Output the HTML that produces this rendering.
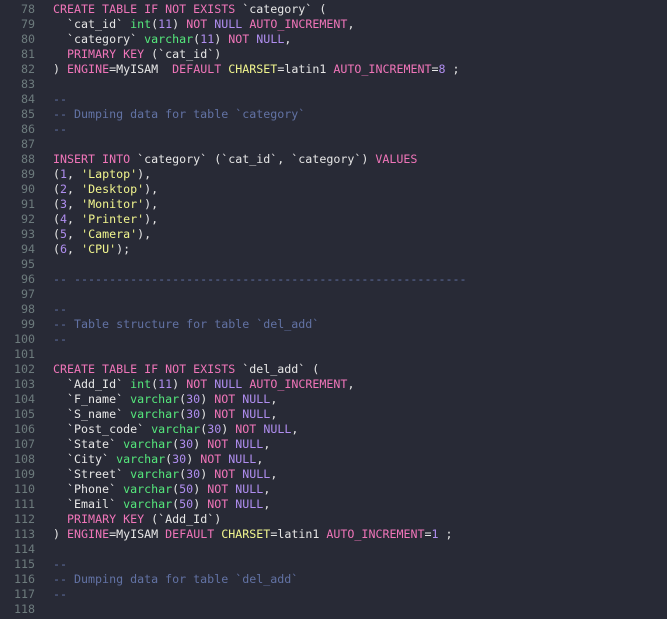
<!DOCTYPE html>
<html><head><style>
html,body{margin:0;padding:0;background:#282a36;width:667px;height:619px;overflow:hidden}
pre{margin:0;padding-top:2px;font-family:"DejaVu Sans Mono","Liberation Mono",monospace;font-size:11.65px;line-height:15px;color:#e6e6e6}
.n{display:inline-block;width:35px;text-align:right;color:#6d7b7d;margin-right:18px}
.k{color:#f075b9}.p{color:#b08ef0}.g{color:#55e87c}.y{color:#f1f58e}.c{color:#6272a4}
</style></head><body><pre>
<span class="n">78</span><span class="k">CREATE TABLE IF NOT EXISTS</span> `category` (
<span class="n">79</span>  `cat_id` <span class="g">int</span>(<span class="p">11</span>) <span class="k">NOT</span> <span class="p">NULL</span> <span class="k">AUTO_INCREMENT</span>,
<span class="n">80</span>  `category` <span class="g">varchar</span>(<span class="p">11</span>) <span class="k">NOT</span> <span class="p">NULL</span>,
<span class="n">81</span>  <span class="k">PRIMARY KEY</span> (`cat_id`)
<span class="n">82</span>) <span class="k">ENGINE</span>=MyISAM  <span class="k">DEFAULT</span> <span class="y">CHARSET</span>=latin1 <span class="k">AUTO_INCREMENT</span>=<span class="p">8</span> ;
<span class="n">83</span>
<span class="n">84</span><span class="c">--</span>
<span class="n">85</span><span class="c">-- Dumping data for table `category`</span>
<span class="n">86</span><span class="c">--</span>
<span class="n">87</span>
<span class="n">88</span><span class="k">INSERT INTO</span> `category` (`cat_id`, `category`) <span class="k">VALUES</span>
<span class="n">89</span>(<span class="p">1</span>, <span class="y">'Laptop'</span>),
<span class="n">90</span>(<span class="p">2</span>, <span class="y">'Desktop'</span>),
<span class="n">91</span>(<span class="p">3</span>, <span class="y">'Monitor'</span>),
<span class="n">92</span>(<span class="p">4</span>, <span class="y">'Printer'</span>),
<span class="n">93</span>(<span class="p">5</span>, <span class="y">'Camera'</span>),
<span class="n">94</span>(<span class="p">6</span>, <span class="y">'CPU'</span>);
<span class="n">95</span>
<span class="n">96</span><span class="c">-- --------------------------------------------------------</span>
<span class="n">97</span>
<span class="n">98</span><span class="c">--</span>
<span class="n">99</span><span class="c">-- Table structure for table `del_add`</span>
<span class="n">100</span><span class="c">--</span>
<span class="n">101</span>
<span class="n">102</span><span class="k">CREATE TABLE IF NOT EXISTS</span> `del_add` (
<span class="n">103</span>  `Add_Id` <span class="g">int</span>(<span class="p">11</span>) <span class="k">NOT</span> <span class="p">NULL</span> <span class="k">AUTO_INCREMENT</span>,
<span class="n">104</span>  `F_name` <span class="g">varchar</span>(<span class="p">30</span>) <span class="k">NOT</span> <span class="p">NULL</span>,
<span class="n">105</span>  `S_name` <span class="g">varchar</span>(<span class="p">30</span>) <span class="k">NOT</span> <span class="p">NULL</span>,
<span class="n">106</span>  `Post_code` <span class="g">varchar</span>(<span class="p">30</span>) <span class="k">NOT</span> <span class="p">NULL</span>,
<span class="n">107</span>  `State` <span class="g">varchar</span>(<span class="p">30</span>) <span class="k">NOT</span> <span class="p">NULL</span>,
<span class="n">108</span>  `City` <span class="g">varchar</span>(<span class="p">30</span>) <span class="k">NOT</span> <span class="p">NULL</span>,
<span class="n">109</span>  `Street` <span class="g">varchar</span>(<span class="p">30</span>) <span class="k">NOT</span> <span class="p">NULL</span>,
<span class="n">110</span>  `Phone` <span class="g">varchar</span>(<span class="p">50</span>) <span class="k">NOT</span> <span class="p">NULL</span>,
<span class="n">111</span>  `Email` <span class="g">varchar</span>(<span class="p">50</span>) <span class="k">NOT</span> <span class="p">NULL</span>,
<span class="n">112</span>  <span class="k">PRIMARY KEY</span> (`Add_Id`)
<span class="n">113</span>) <span class="k">ENGINE</span>=MyISAM <span class="k">DEFAULT</span> <span class="y">CHARSET</span>=latin1 <span class="k">AUTO_INCREMENT</span>=<span class="p">1</span> ;
<span class="n">114</span>
<span class="n">115</span><span class="c">--</span>
<span class="n">116</span><span class="c">-- Dumping data for table `del_add`</span>
<span class="n">117</span><span class="c">--</span>
<span class="n">118</span>
</pre></body></html>
